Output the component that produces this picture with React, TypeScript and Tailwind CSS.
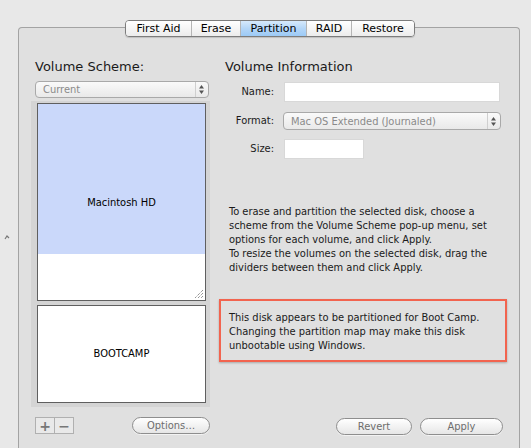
import React from "react";

const font = "font-['DejaVu_Sans',sans-serif]";
const body = "font-['DejaVu_Sans_Condensed','Open_Sans',sans-serif]";

function Stepper() {
  return (
    <svg width="7" height="11" viewBox="0 0 7 11">
      <path d="M3.5 1 L6 4.5 L1 4.5 Z" fill="#555" />
      <path d="M3.5 10 L6 6.5 L1 6.5 Z" fill="#555" />
    </svg>
  );
}

function PopUp({ label, className }: { label: string; className: string }) {
  return (
    <div
      className={`flex items-center rounded-[4px] border border-[#a9a9a9] bg-gradient-to-b from-[#fafafa] to-[#e9e9e9] text-[11px] text-[#8a8a8a] ${body} ${className}`}
    >
      <span className="flex-1 truncate pl-[7px] leading-none">{label}</span>
      <span className="mr-[1px] flex h-full w-[12px] items-center justify-center border-l border-[#cfcfcf]">
        <Stepper />
      </span>
    </div>
  );
}

function Pill({ label, className }: { label: string; className: string }) {
  return (
    <button
      className={`flex h-[17px] items-center justify-center rounded-full border border-[#8e8e8e] bg-gradient-to-b from-[#ffffff] to-[#e6e6e6] text-[11px] leading-none text-[#6d6d6d] shadow-[0_1px_0_rgba(255,255,255,0.6)] ${body} ${className}`}
    >
      {label}
    </button>
  );
}

const tabs = [
  { name: "First Aid", w: "w-[65px]" },
  { name: "Erase", w: "w-[49px]" },
  { name: "Partition", w: "w-[66px]" },
  { name: "RAID", w: "w-[45px]" },
  { name: "Restore", w: "w-[63px]" },
];

export default function App() {
  return (
    <div className={`flex h-[448px] w-[531px] overflow-hidden bg-[#e8e8e8] ${font}`}>
      <div className="w-[18px] shrink-0 pl-[4px] pt-[235px]">
        <svg width="6" height="5" viewBox="0 0 6 5">
          <path d="M1 4 L3 1 L5 3" stroke="#777" strokeWidth="1.2" fill="none" />
        </svg>
      </div>

      <div className="flex w-[502px] shrink-0 flex-col">
        <div className="relative z-10 mt-[20px] flex justify-center pl-[2px]">
          <div className="flex h-[17px] overflow-hidden rounded-[4px] border border-[#7c7c7c] shadow-[0_1px_1px_rgba(0,0,0,0.15)]">
            {tabs.map((t, i) => (
              <div
                key={t.name}
                className={`flex items-center justify-center text-[11px] leading-none text-black ${t.w} ${
                  i > 0 ? "border-l border-[#b5b5b5]" : ""
                } ${
                  t.name === "Partition"
                    ? "bg-gradient-to-b from-[#d6e9fb] via-[#b4d6f7] to-[#9ccaf6]"
                    : "bg-gradient-to-b from-[#ffffff] to-[#ececec]"
                }`}
              >
                {t.name}
              </div>
            ))}
          </div>
        </div>

        <div className="-mt-[10px] flex flex-1 rounded-t-[4px] border border-b-0 border-[#a3a3a3] bg-[#e0e0e0] pl-[12px]">
          {/* left column */}
          <div className="flex w-[179px] flex-col">
            <div className="mt-[31px] h-[15px] pl-[4px] text-[13px] leading-[15px] text-[#1a1a1a]">Volume Scheme:</div>
            <PopUp label="Current" className="ml-[4px] mt-[7px] h-[17px] w-[174px]" />
            <div className="mt-[3px] flex h-[306px] flex-col gap-[4px] bg-[#d4d4d4] pl-[6px] pr-[4px] pt-[2px]">
              <div className="flex h-[198px] flex-col border border-[#5f5f5f] bg-white">
                <div className={`flex h-[150px] items-center justify-center bg-[#cad8fa] pt-[48px] text-[11px] text-black ${body}`}>
                  Macintosh HD
                </div>
                <div className="flex flex-1 items-end justify-end pb-[1px] pr-[1px]">
                  <svg width="11" height="11" viewBox="0 0 11 11">
                    <path d="M10 2 L2 10 M10 5 L5 10 M10 8 L8 10" stroke="#666" strokeWidth="1" strokeDasharray="1 1" />
                  </svg>
                </div>
              </div>
              <div className={`flex h-[98px] items-center justify-center border border-[#5f5f5f] bg-white text-[11px] text-black ${body}`}>
                BOOTCAMP
              </div>
            </div>
            <div className="mt-[10px] flex items-center">
              <div className="ml-[4px] flex h-[17px] border border-[#b0b0b0] bg-[#e9e9e9]">
                <span className="flex w-[18px] items-center justify-center text-[14px] font-bold leading-none text-[#777]">+</span>
                <span className="flex w-[19px] items-center justify-center border-l border-[#b0b0b0] text-[14px] font-bold leading-none text-[#777]">−</span>
              </div>
              <Pill label="Options…" className="ml-[58px] w-[79px]" />
            </div>
          </div>

          {/* right column */}
          <div className={`ml-[9px] flex w-[288px] flex-col`}>
            <div className="mt-[31px] h-[15px] pl-[6px] text-[13px] leading-[15px] text-[#1a1a1a]">Volume Information</div>
            <div className={`mt-[8px] flex h-[20px] items-center ${body}`}>
              <span className="w-[55px] text-right text-[11px] text-[#1a1a1a]">Name:</span>
              <div className="ml-[10px] h-[20px] w-[216px] border border-[#d8d8d8] bg-white" />
            </div>
            <div className={`mt-[10px] flex h-[18px] items-center ${body}`}>
              <span className="w-[55px] text-right text-[11px] text-[#1a1a1a]">Format:</span>
              <PopUp label="Mac OS Extended (Journaled)" className="ml-[9px] h-[18px] w-[218px]" />
            </div>
            <div className={`mt-[9px] flex h-[20px] items-center ${body}`}>
              <span className="w-[55px] text-right text-[11px] text-[#1a1a1a]">Size:</span>
              <div className="ml-[10px] h-[20px] w-[80px] border border-[#d8d8d8] bg-white" />
            </div>
            <p className={`mt-[46px] h-[70px] pl-[10px] text-[11px] leading-[14px] text-[#1a1a1a] ${body}`}>
              To erase and partition the selected disk, choose a scheme from the Volume Scheme pop-up menu, set options for
              each volume, and click Apply.
              <br />
              To resize the volumes on the selected disk, drag the dividers between them and click Apply.
            </p>
            <div
              className={`mt-[24px] h-[63px] w-[288px] border-2 border-[#f2644f] pl-[8px] pt-[10px] text-[11px] leading-[14px] text-[#1a1a1a] shadow-[0_1px_2px_rgba(0,0,0,0.25)] ${body}`}
            >
              This disk appears to be partitioned for Boot Camp. Changing the partition map may make this disk unbootable
              using Windows.
            </div>
            <div className="mt-[56px] flex">
              <Pill label="Revert" className="ml-[117px] w-[76px]" />
              <Pill label="Apply" className="ml-[8px] w-[83px]" />
            </div>
          </div>
        </div>
      </div>
    </div>
  );
}
